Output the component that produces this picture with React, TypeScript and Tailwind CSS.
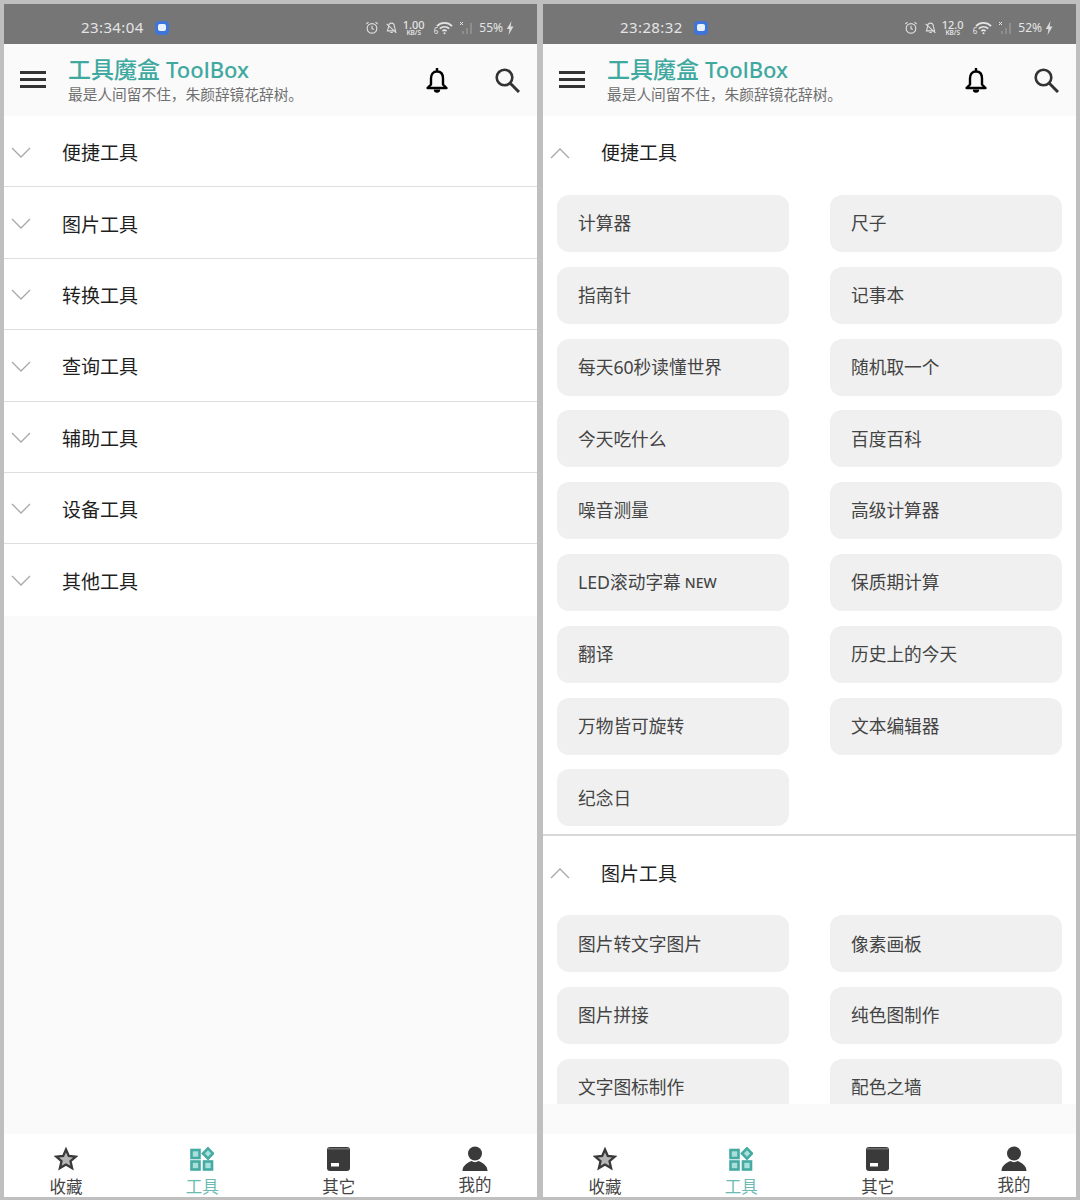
const leftGroups = ["便捷工具", "图片工具", "转换工具", "查询工具", "辅助工具", "设备工具", "其他工具"];

const quickTools = [
  "计算器",
  "尺子",
  "指南针",
  "记事本",
  "每天60秒读懂世界",
  "随机取一个",
  "今天吃什么",
  "百度百科",
  "噪音测量",
  "高级计算器",
  "LED滚动字幕",
  "保质期计算",
  "翻译",
  "历史上的今天",
  "万物皆可旋转",
  "文本编辑器",
  "纪念日",
];

const imageTools = ["图片转文字图片", "像素画板", "图片拼接", "纯色图制作", "文字图标制作", "配色之墙"];

function StatusBar({ time, speed, battery }: { time: string; speed: string; battery: string }) {
  return (
    <div className="h-10 shrink-0 bg-[#767676] flex items-center pt-[7px] text-[#e4e4e4]">
      <span className="ml-[77px] text-[15px] tracking-[0.4px]">{time}</span>
      <span className="ml-[11px] w-[14px] h-[14px] rounded-[4px] bg-[#3f74d8] flex items-center justify-center">
        <span className="w-[8px] h-[7px] rounded-[2px] bg-[#e8f2ff]" />
      </span>
      <div className="ml-auto mr-[23px] flex items-center">
        {/* alarm */}
        <svg width="14" height="15" viewBox="0 0 16 16" fill="none" stroke="#dcdcdc" strokeWidth="1.3">
          <circle cx="8" cy="9" r="5.5" />
          <path d="M8 6v3.2l2 1M1.5 4 4 1.8M14.5 4 12 1.8" />
        </svg>
        {/* muted bell */}
        <svg className="ml-[6px]" width="13" height="14" viewBox="0 0 16 16" fill="none" stroke="#dcdcdc" strokeWidth="1.4">
          <path d="M8 2c-2.500 0-3.600 2-3.600 4.500L3 11.500h10l-1.400-5C11.600 4 10.500 2 8 2ZM6.500 13.500h3M2 3l12 11" />
        </svg>
        <div className="ml-[6px] w-[20px] flex flex-col items-center">
          <span className="text-[11px] font-medium leading-[9px]">{speed}</span>
          <span className="mt-[1px] text-[6.5px] font-semibold leading-[6px]">KB/S</span>
        </div>
        {/* wifi with the little 6 */}
        <span className="ml-[10px] -mr-[2px] text-[8px] leading-[8px] mt-[6px]">6</span>
        <svg width="17" height="15" viewBox="0 0 18 15" fill="none" stroke="#e4e4e4" strokeWidth="1.800">
          <path d="M1 6C5.500 1.500 12.500 1.500 17 6M4 8.800c3-2.800 7-2.800 10 0M6.800 11.300c1.300-1.100 3.100-1.100 4.400 0" />
          <circle cx="9" cy="13.500" r="1.100" fill="#e4e4e4" stroke="none" />
        </svg>
        {/* signal */}
        <svg className="ml-[6px]" width="14" height="15" viewBox="0 0 14 15" fill="#8e8e8e">
          <path d="M1 2l3 3M4 2 1 5" stroke="#e4e4e4" strokeWidth="1" />
          <rect x="3" y="11" width="2" height="3" />
          <rect x="7" y="8" width="2" height="6" />
          <rect x="11" y="3" width="2" height="11" />
        </svg>
        <span className="ml-[6px] text-[12px]">{battery}</span>
        <svg className="ml-[3px]" width="8" height="14" viewBox="0 0 8 14" fill="#dcdcdc">
          <path d="M5.500 0 0.800 8h2.700L2.500 14 7.500 5.500H4.600Z" />
        </svg>
      </div>
    </div>
  );
}

function AppHeader() {
  return (
    <div className="h-[72px] shrink-0 bg-[#fafafa] flex items-center">
      <div className="ml-[16px] w-[26px] flex flex-col gap-[4px] shrink-0 -mt-[1px]">
        <span className="h-[3px] bg-[#333333]" />
        <span className="h-[3px] bg-[#333333]" />
        <span className="h-[3px] bg-[#333333]" />
      </div>
      <div className="ml-[22px] -mt-[1px] flex flex-col">
        <span className="text-[23px] leading-[27px] font-medium text-[#3fa9a0] whitespace-nowrap">
          工具魔盒 <span className="text-[22px]">ToolBox</span>
        </span>
        <span className="mt-[2px] text-[14.7px] leading-[18px] text-[#6f6f6f] whitespace-nowrap">最是人间留不住，朱颜辞镜花辞树。</span>
      </div>
      {/* bell */}
      <svg className="ml-auto" width="24" height="27" viewBox="0 0 24 27" fill="none" stroke="#000000" strokeWidth="2.400">
        <path d="M12 1v3M12 4.500c-4 0-6 3-6 7v6l-3.500 3.500h19L18 17.500v-6c0-4-2-7-6-7Z" strokeLinejoin="round" />
        <path d="M8.800 22.500a3.200 3.200 0 0 0 6.400 0Z" fill="#000000" stroke="none" />
      </svg>
      {/* search */}
      <svg className="ml-[46px] mr-[17px]" width="25" height="25" viewBox="0 0 25 25" fill="none" stroke="#333333" strokeWidth="2.600">
        <circle cx="9.500" cy="9.500" r="7.800" />
        <path d="M15 15l9 9" strokeWidth="3" />
      </svg>
    </div>
  );
}

function Chevron({ open }: { open: boolean }) {
  return (
    <svg className="ml-[7px] -mt-[2px] shrink-0" width="20" height="12" viewBox="0 0 20 12" fill="none" stroke="#a8a8a8" strokeWidth="1.300">
      <path d={open ? "M1 11 10 2l9 9" : "M1 1l9 9 9-9"} />
    </svg>
  );
}

function GroupHeader({ title, open }: { title: string; open: boolean }) {
  return (
    <div className="h-[71px] pt-[4px] flex items-center">
      <Chevron open={open} />
      <span className="ml-[31px] text-[19px] text-[#1f1f1f]">{title}</span>
    </div>
  );
}

function ToolGrid({ items }: { items: string[] }) {
  return (
    <div className="grid grid-cols-[232px_232px] gap-x-[41px] gap-y-[14.8px] pl-[14px]">
      {items.map((item) => (
        <div key={item} className="h-[57px] rounded-[12px] bg-[#f0f0f0] flex items-center pl-[21px] text-[17.7px] text-[#444444] whitespace-nowrap">
          {item}
          {item === "LED滚动字幕" && <span className="ml-[4px] text-[14px] font-medium text-[#444444]">NEW</span>}
        </div>
      ))}
    </div>
  );
}

function BottomNav() {
  const label = "text-[16.500px] leading-[20px] text-[#444444] whitespace-nowrap";
  return (
    <div className="h-[63px] shrink-0 bg-white flex justify-between px-[34px]">
      <div className="w-[56px] flex flex-col items-center pt-[13px]">
        <svg width="24" height="24" viewBox="0 0 24 24" fill="#b5b5b5" stroke="#3a3a3a" strokeWidth="2.300">
          <path d="M12 2.500 14.800 9l7 .6-5.300 4.600 1.600 6.900L12 17.500l-6.100 3.600 1.600-6.900L2.200 9.600l7-.6Z" />
        </svg>
        <span className={`${label} mt-[6px]`}>收藏</span>
      </div>
      <div className="w-[56px] flex flex-col items-center pt-[13px]">
        <svg width="24" height="24" viewBox="0 0 24 24" fill="#a9e0db" stroke="#45aaa2" strokeWidth="2.600">
          <rect x="1.500" y="3" width="8" height="8" />
          <rect x="1.500" y="14.500" width="8" height="8" />
          <rect x="14" y="14.500" width="8" height="8" />
          <path d="M18 1.300 23 6.500 18 11.700 13 6.500Z" />
        </svg>
        <span className="text-[16.500px] leading-[20px] text-[#6dbab4] whitespace-nowrap mt-[6px]">工具</span>
      </div>
      <div className="w-[56px] flex flex-col items-center pt-[13px]">
        <svg width="23" height="24" viewBox="0 0 23 24" fill="#3a3a3a">
          <rect x="0" y="0" width="23" height="24" rx="3" />
          <rect x="1" y="1.500" width="21" height="0.800" fill="#9a9a9a" />
          <rect x="4" y="16" width="8" height="3.500" fill="#ffffff" />
        </svg>
        <span className={`${label} mt-[6px]`}>其它</span>
      </div>
      <div className="w-[56px] flex flex-col items-center pt-[12px]">
        <svg width="26" height="25" viewBox="0 0 26 25" fill="#3a3a3a">
          <circle cx="13" cy="7.500" r="7" />
          <path d="M0.500 25c0-5 4-8 9-10 2 1.500 5 1.500 7 0 5 2 9 5 9 10Z" />
        </svg>
        <span className={`${label} mt-[4px]`}>我的</span>
      </div>
    </div>
  );
}

export default function App() {
  return (
    <div className="w-[1080px] h-[1200px] bg-[#bfbfbf] flex gap-[6px] px-[4px] pt-[4px] pb-[3px] overflow-hidden font-['Noto_Sans','Noto_Sans_CJK_SC',sans-serif]">
      {/* left phone */}
      <div className="w-[533px] flex flex-col">
        <StatusBar time="23:34:04" speed="1.00" battery="55%" />
        <AppHeader />
        <div className="flex-1 bg-[#fafafa]">
          <div className="bg-white">
            {leftGroups.map((group, i) => (
              <div key={group} className={i < leftGroups.length - 1 ? "border-b border-[#dddddd] h-[71.4px]" : "h-[72px]"}>
                <GroupHeader title={group} open={false} />
              </div>
            ))}
          </div>
        </div>
        <BottomNav />
      </div>

      {/* right phone */}
      <div className="w-[533px] flex flex-col">
        <StatusBar time="23:28:32" speed="12.0" battery="52%" />
        <AppHeader />
        <div className="flex-1 min-h-0 bg-[#fafafa] flex flex-col">
          <div className="h-[988px] bg-white overflow-hidden">
            <GroupHeader title="便捷工具" open />
            <div className="pt-[8px] pb-[8px] border-b-2 border-[#d8d8d8]">
              <ToolGrid items={quickTools} />
            </div>
            <GroupHeader title="图片工具" open />
            <div className="pt-[8px]">
              <ToolGrid items={imageTools} />
            </div>
          </div>
        </div>
        <BottomNav />
      </div>
    </div>
  );
}
